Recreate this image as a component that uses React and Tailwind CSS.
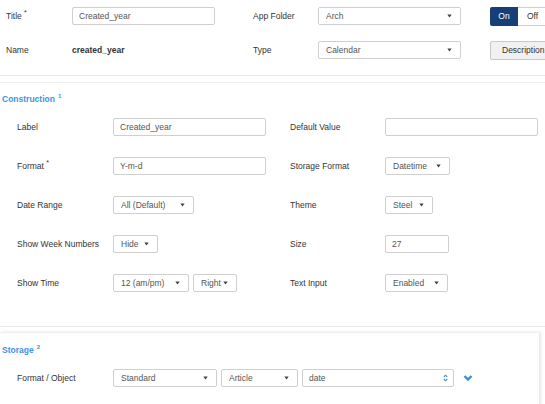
import React from 'react';

const font = { fontFamily: '"Liberation Sans", Arial, sans-serif' };

function Caret() {
  return (
    <svg width="5" height="4" viewBox="0 0 5 4" className="shrink-0">
      <path d="M0.3 0.5h4.4L2.5 3.6z" fill="#444" />
    </svg>
  );
}

function Select({ value, w }) {
  return (
    <div className={`${w} shrink-0 h-[18px] border border-[#cfcfcf] rounded-[2px] bg-white flex items-center justify-between pl-[7px] pr-[8px] text-[8.5px] text-[#555]`}>
      <span>{value}</span>
      <Caret />
    </div>
  );
}

function Input({ value, w }) {
  return (
    <div className={`${w} shrink-0 h-[18px] border border-[#cfcfcf] rounded-[2px] bg-white flex items-center px-[6px] text-[8.5px] text-[#555]`}>
      {value}
    </div>
  );
}

function Row({ left, leftField, right, rightField }) {
  return (
    <div className="flex items-center h-[18px]">
      <div className="w-[96px] shrink-0 pl-[17px] box-content text-[8.5px] text-[#333]">{left}</div>
      <div className="w-[177px] shrink-0 flex gap-[4px]">{leftField}</div>
      <div className="w-[95px] shrink-0 text-[8.5px] text-[#333]">{right}</div>
      <div className="flex">{rightField}</div>
    </div>
  );
}

export default function App() {
  return (
    <div className="w-[545px] h-[404px] overflow-hidden bg-white relative" style={font}>
      <div className="pt-[7px] pl-[6px]">
        <div className="flex items-center h-[18px]">
          <div className="w-[66px] shrink-0 text-[8.5px] text-[#333]">Title <sup className="text-[7px]">*</sup></div>
          <Input value="Created_year" w="w-[143px]" />
          <div className="ml-[38px] w-[65px] shrink-0 text-[8.5px] text-[#333]">App Folder</div>
          <Select value="Arch" w="w-[143px]" />
          <div className="ml-[29px] shrink-0 flex h-[19px] text-[8.5px]">
            <div className="w-[28px] bg-[#163f78] text-white flex items-center justify-center rounded-l-[2px]">On</div>
            <div className="w-[30px] border border-l-0 border-[#cfcfcf] text-[#333] flex items-center justify-center">Off</div>
          </div>
        </div>
        <div className="flex items-center h-[18px] mt-[16px]">
          <div className="w-[66px] shrink-0 text-[8.5px] text-[#333]">Name</div>
          <div className="w-[143px] shrink-0 text-[8.5px] font-bold text-[#333]">created_year</div>
          <div className="ml-[38px] w-[65px] shrink-0 text-[8.5px] text-[#333]">Type</div>
          <Select value="Calendar" w="w-[143px]" />
          <div className="ml-[29px] h-[19px] shrink-0 border border-[#c8c8c8] rounded-[2px] bg-[#f1f1f1] flex items-center px-[11px] text-[8.5px] text-[#333] whitespace-nowrap">
            Description
          </div>
        </div>
      </div>

      <div className="mt-[16px] h-px bg-[#e6e6e6]" />
      <div className="mt-[6px] h-px bg-[#efefef]" />

      <div className="mt-[9px] h-[14px] flex items-center pl-[2px] text-[8.5px] font-bold text-[#3d93e0]">
        Construction <sup className="ml-[3px] text-[6px]">1</sup>
      </div>

      <div className="mt-[12px] flex flex-col gap-[21px]">
        <Row left="Label" leftField={<Input value="Created_year" w="w-[153px]" />} right="Default Value" rightField={<Input value="" w="w-[153px]" />} />
        <Row left={<span>Format <sup className="text-[7px]">*</sup></span>} leftField={<Input value="Y-m-d" w="w-[153px]" />} right="Storage Format" rightField={<Select value="Datetime" w="w-[65px]" />} />
        <Row left="Date Range" leftField={<Select value="All (Default)" w="w-[81px]" />} right="Theme" rightField={<Select value="Steel" w="w-[48px]" />} />
        <Row left="Show Week Numbers" leftField={<Select value="Hide" w="w-[45px]" />} right="Size" rightField={<Input value="27" w="w-[64px]" />} />
        <Row left="Show Time" leftField={<><Select value="12 (am/pm)" w="w-[76px]" /><Select value="Right" w="w-[44px]" /></>} right="Text Input" rightField={<Select value="Enabled" w="w-[63px]" />} />
      </div>

      <div className="mt-[34px] h-px bg-[#e6e6e6]" />
      <div className="mt-[5px] w-[539px] h-[80px] border-t border-[#efefef] shadow-[2px_0_3px_rgba(0,0,0,0.10)]">
        <div className="mt-[10px] h-[14px] flex items-center pl-[2px] text-[8.5px] font-bold text-[#3d93e0]">
          Storage <sup className="ml-[3px] text-[6px]">2</sup>
        </div>
        <div className="mt-[12px] flex items-center h-[18px]">
          <div className="w-[96px] shrink-0 pl-[17px] box-content text-[8.5px] text-[#333]">Format / Object</div>
          <div className="flex gap-[4px] items-center">
            <Select value="Standard" w="w-[104px]" />
            <Select value="Article" w="w-[77px]" />
            <div className="w-[152px] shrink-0 h-[18px] border border-[#cfcfcf] rounded-[2px] bg-white flex items-center justify-between pl-[6px] pr-[5px] text-[8.5px] text-[#555]">
              <span>date</span>
              <svg width="5" height="8" viewBox="0 0 5 8">
                <path d="M0.8 3L2.5 1.2L4.2 3M0.8 5L2.5 6.8L4.2 5" fill="none" stroke="#4a8fd8" strokeWidth="1.1" />
              </svg>
            </div>
            <svg width="10" height="8" viewBox="0 0 10 8" className="ml-[5px] shrink-0">
              <path d="M1.5 2L5 5.5L8.5 2" fill="none" stroke="#3b8fd9" strokeWidth="2.4" />
            </svg>
          </div>
        </div>
      </div>
    </div>
  );
}
